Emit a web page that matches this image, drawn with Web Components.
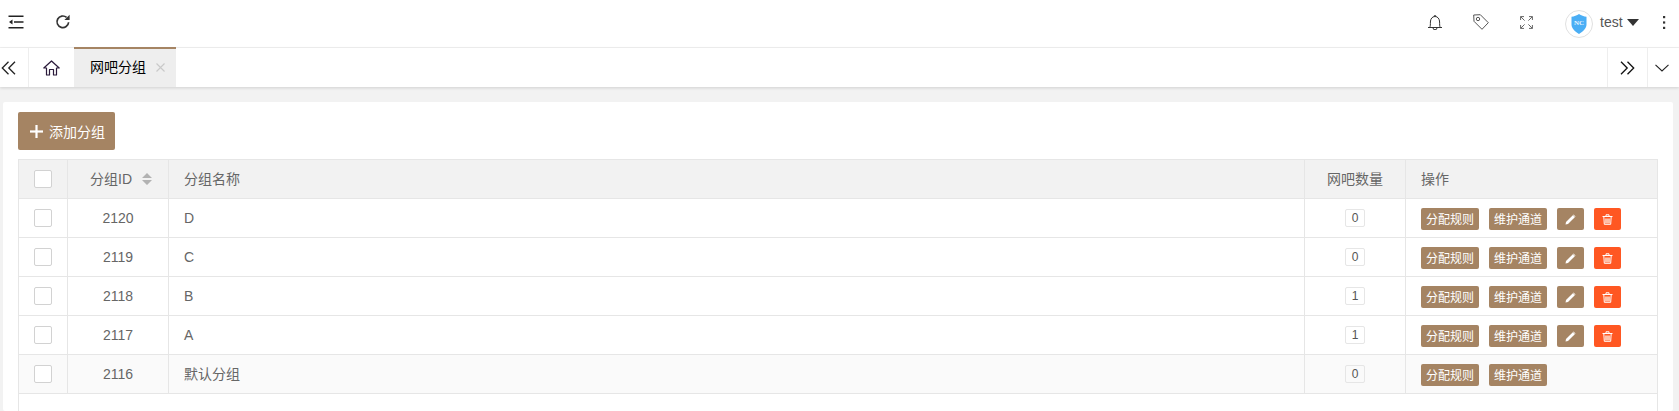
<!DOCTYPE html>
<html lang="zh"><head><meta charset="utf-8"><title>网吧分组</title>
<style>
html,body{margin:0;height:100%;background:#f2f2f2;font:14px "Liberation Sans","Noto Sans CJK SC",sans-serif;color:#666;overflow:hidden}
body{display:flex;flex-direction:column}
</style></head><body>
<app-header></app-header>
<tab-bar></tab-bar>
<page-body>
  <add-button>添加分组</add-button>
  <group-table>
    <group-row gid="2120" name="D" count="0" actions></group-row>
    <group-row gid="2119" name="C" count="0" actions></group-row>
    <group-row gid="2118" name="B" count="1" actions></group-row>
    <group-row gid="2117" name="A" count="1" actions></group-row>
    <group-row gid="2116" name="默认分组" count="0" tint cjk></group-row>
  </group-table>
</page-body>
<script>
const def=(tag,html)=>customElements.define(tag,class extends HTMLElement{
  connectedCallback(){ if(this.shadowRoot) return; const r=this.attachShadow({mode:'open'}); r.innerHTML=typeof html==='function'?html(this):html; }
});
def('app-header',`<style>
:host{display:flex;flex:none;align-items:center;height:47px;background:#fff;border-bottom:1px solid #f1f1f1;box-sizing:content-box;color:#333}
svg{display:block;flex:none}
.l{display:flex;align-items:center;padding:0 0 3px 8px;gap:31px}
.r{margin-left:auto;display:flex;align-items:center;padding-bottom:3px}
.name{font-size:14px;line-height:16px;color:#555;margin-left:7px;width:27px}
.caret{width:0;height:0;border:6px solid transparent;border-top:7px solid #333;border-bottom:0}
.av{margin-top:3px}
</style>
<div class="l">
<svg width="16" height="14" viewBox="0 0 16 14" fill="none" stroke="#222" stroke-width="1.500"><path d="M0.500 1.200H15.500M6 7H15.500M0.500 12.800H15.500"/><path d="M4.500 4.500V9.500L1 7Z" fill="#222" stroke="none"/></svg>
<svg width="16" height="16" viewBox="0 0 16 16" fill="none" stroke="#333" stroke-width="1.700"><path d="M13.600 8.200A5.800 5.800 0 1 1 11.600 3.400"/><path d="M14.600 0.800V6H9.400Z" fill="#333" stroke="none"/></svg>
</div>
<div class="r">
<svg width="14" height="15" viewBox="0 0 14 15" fill="none" stroke="#333" stroke-width="1" style="margin-right:31px"><path d="M0 12.500H14M1.800 12.500C2.400 11 2.400 9.500 2.400 7 2.400 3.700 4.400 1.500 7 1.500S11.600 3.700 11.600 7C11.600 9.500 11.600 11 12.200 12.500"/><path d="M5 12.800A2 2 0 0 0 9 12.800M6 1.500A1 1 0 0 1 8 1.500"/></svg>
<svg width="16" height="16" viewBox="0 0 16 16" fill="none" stroke="#555" stroke-width="1" style="margin-right:31px"><path d="M0.700 1 7.300 0.700 15.300 8.700 9 15.300 1 7.300Z" stroke-linejoin="round"/><circle cx="5" cy="5" r="1.700"/></svg>
<svg width="13" height="13" viewBox="0 0 13 13" fill="none" stroke="#666" stroke-width="1" style="margin-right:32px"><path d="M0.600 4V0.600H4M0.600 0.600 4.600 4.600M12.400 4V0.600H9M12.400 0.600 8.400 4.600M0.600 9V12.400H4M0.600 12.400 4.600 8.400M12.400 9V12.400H9M12.400 12.400 8.400 8.400"/></svg>
<svg class="av" width="28" height="28" viewBox="0 0 28 28"><circle cx="14" cy="14" r="13.500" fill="#fff" stroke="#e0e0e0"/><path d="M14 4C16 5.500 19 6.500 21.500 6.700V14.500C21.500 18.500 18 21.500 14 24 10 21.500 6.500 18.500 6.500 14.500V6.700C9 6.500 12 5.500 14 4Z" fill="#4aaef5"/><text x="14" y="15" font-family="Liberation Serif" font-size="7" font-weight="700" fill="#e6f5ff" text-anchor="middle">NC</text></svg>
<span class="name">test</span><span class="caret"></span>
<svg width="4" height="13" viewBox="0 0 4 13" fill="#333" style="margin:0 13px 0 23px"><rect x="1" y="0" width="2.200" height="2.200"/><rect x="1" y="5.400" width="2.200" height="2.200"/><rect x="1" y="10.800" width="2.200" height="2.200"/></svg>
</div>`);
def('tab-bar',`<style>
:host{display:flex;flex:none;height:39px;background:#fff;box-shadow:0 1px 3px rgba(0,0,0,.14);position:relative;color:#000}
.c{display:flex;align-items:center;justify-content:center;box-sizing:border-box;flex:none}
.a{width:29px;border-right:1px solid #eee;justify-content:flex-start;padding-left:1px}
.home{width:45px}
.tab{width:102px;background:#eeeeee;border-top:2px solid #a58463;font-size:14px;gap:10px;padding:0 0 2px 16px;margin-top:-1px;height:40px;justify-content:flex-start}
.tab span{margin-bottom:2px}
.x{color:#c9c9c9;display:block}
.sp{flex:1}
.b{width:40px;border-left:1px solid #eee}
.d{width:32px;border-left:1px solid #eee}
svg{display:block}
</style>
<div class="c a"><svg width="15" height="14" viewBox="0 0 15 14" fill="none" stroke="#222" stroke-width="1.300"><path d="M7.500 0.800 1.300 7 7.500 13.200M14 0.800 7.800 7 14 13.200"/></svg></div>
<div class="c home"><svg width="17" height="16" viewBox="0 0 17 16" fill="none" stroke="#2a1a3a" stroke-width="1.200"><path d="M0.800 8 8.500 1 16.200 8H13.500V15H10.500V9.500H6.500V15H3.500V8Z" stroke-linejoin="round"/></svg></div>
<div class="c tab"><span>网吧分组</span><svg class="x" width="9" height="9" viewBox="0 0 9 9" stroke="currentColor" stroke-width="1.100"><path d="M0.500 0.500 8.500 8.500M8.500 0.500 0.500 8.500"/></svg></div>
<div class="sp"></div>
<div class="c b"><svg width="15" height="14" viewBox="0 0 15 14" fill="none" stroke="#111" stroke-width="1.300"><path d="M1 0.800 7.200 7 1 13.200M7.500 0.800 13.700 7 7.500 13.200"/></svg></div>
<div class="c d"><svg width="14" height="8" viewBox="0 0 14 8" fill="none" stroke="#222" stroke-width="1.100" style="margin-left:-3px"><path d="M0.500 0.800 7 7 13.500 0.800"/></svg></div>`);
def('page-body',`<style>
:host{display:flex;flex-direction:column;flex:1;min-height:0;margin:15px 6px 0 3px;padding:10px 15px 0;background:#fff;border-radius:2px;box-sizing:border-box}
</style><slot></slot>`);
def('add-button',`<style>
:host{display:flex;flex:none;align-items:center;justify-content:center;gap:6px;width:97px;height:38px;background:#a58463;border-radius:2px;color:#fff;font-size:14px;box-sizing:border-box;margin-bottom:9px;padding-left:2px}
svg{display:block;margin-top:1px}
.t{margin-bottom:1px;display:block}
</style><svg width="13" height="13" viewBox="0 0 13 13" fill="#fff"><rect x="5.400" y="0" width="2.200" height="13"/><rect x="0" y="5.400" width="13" height="2.200"/></svg><span class="t"><slot></slot></span>`);
const cols='grid-template-columns:49px 101px 1fr 101px 251px;';
def('group-table',`<style>
:host{display:block;flex:1;min-height:0;border:1px solid #e6e6e6;border-bottom:0;width:1640px;box-sizing:border-box}
.h{display:grid;${cols}height:39px;background:#f2f2f2;border-bottom:1px solid #e6e6e6;box-sizing:border-box}
.h>div{display:flex;align-items:center;border-right:1px solid #e6e6e6;padding:0 15px 2px;box-sizing:border-box;color:#666}
.h>div:last-child{border-right:0}
.h>.ck{justify-content:center;padding:0}
.ck i{display:block;width:18px;height:18px;box-sizing:border-box;border:1px solid #d2d2d2;border-radius:2px;background:#fff}
.ctr{justify-content:center}
.h>.id{padding-left:22px}
.sort{margin:2px 0 0 10px;display:block}
</style>
<div class="h"><div class="ck"><i></i></div><div class="id"><span>分组ID</span><svg class="sort" width="10" height="12" viewBox="0 0 10 12" fill="#b2b2b2"><path d="M5 0 10 5H0ZM5 12 0 7H10Z"/></svg></div><div>分组名称</div><div class="ctr">网吧数量</div><div>操作</div></div>
<slot></slot>`);
def('group-row',el=>`<style>
:host{display:grid;${cols}height:39px;border-bottom:1px solid #e6e6e6;box-sizing:border-box;background:${el.hasAttribute('tint')?'#fafafa':'#fff'}}
.c{display:flex;align-items:center;border-right:1px solid #e6e6e6;padding:0 15px;box-sizing:border-box;color:#666}
.c:last-child{border-right:0;gap:10px;padding-top:2px}
.ck{justify-content:center;padding:0}
.ck i{display:block;width:18px;height:18px;box-sizing:border-box;border:1px solid #d2d2d2;border-radius:2px;background:#fff}
.ctr{justify-content:center}
.nm{padding-bottom:${el.hasAttribute('cjk')?2:0}px}
.n{display:block;min-width:20px;height:18px;line-height:16px;font-size:12px;text-align:center;border:1px solid #e6e6e6;border-radius:2px;box-sizing:border-box;color:#555}
.b{display:flex;align-items:center;justify-content:center;height:22px;background:#a58463;color:#fff;font-size:12px;border-radius:2px;width:58px;flex:none;white-space:nowrap;box-sizing:border-box;padding-bottom:2px}
.i{width:27px;padding-bottom:0}
.del{background:#ff5722}
</style>
<div class="c ck"><i></i></div><div class="c ctr">${el.getAttribute('gid')}</div><div class="c nm">${el.getAttribute('name')}</div><div class="c ctr"><span class="n">${el.getAttribute('count')}</span></div>
<div class="c"><span class="b">分配规则</span><span class="b">维护通道</span>${el.hasAttribute('actions')?`<span class="b i"><svg width="11" height="11" viewBox="0 0 11 11" fill="#fff"><path d="M0.500 10.500 1 8 7.800 1.200 9.800 3.200 3 10Z"/><path d="M8.500 0.500 10.500 2.500 10 3 8 1Z"/></svg></span><span class="b i del"><svg width="11" height="11" viewBox="0 0 11 11" fill="none" stroke="#fff" stroke-width="1"><path d="M0.500 2.500H10.500M4 2.500V0.800H7V2.500M1.800 2.500 2.300 10.300H8.700L9.200 2.500"/><path d="M3 4.500H8V9.500H3Z" fill="#ffc0a8" stroke="none"/></svg></span>`:''}</div>`);
</script>
</body></html>
